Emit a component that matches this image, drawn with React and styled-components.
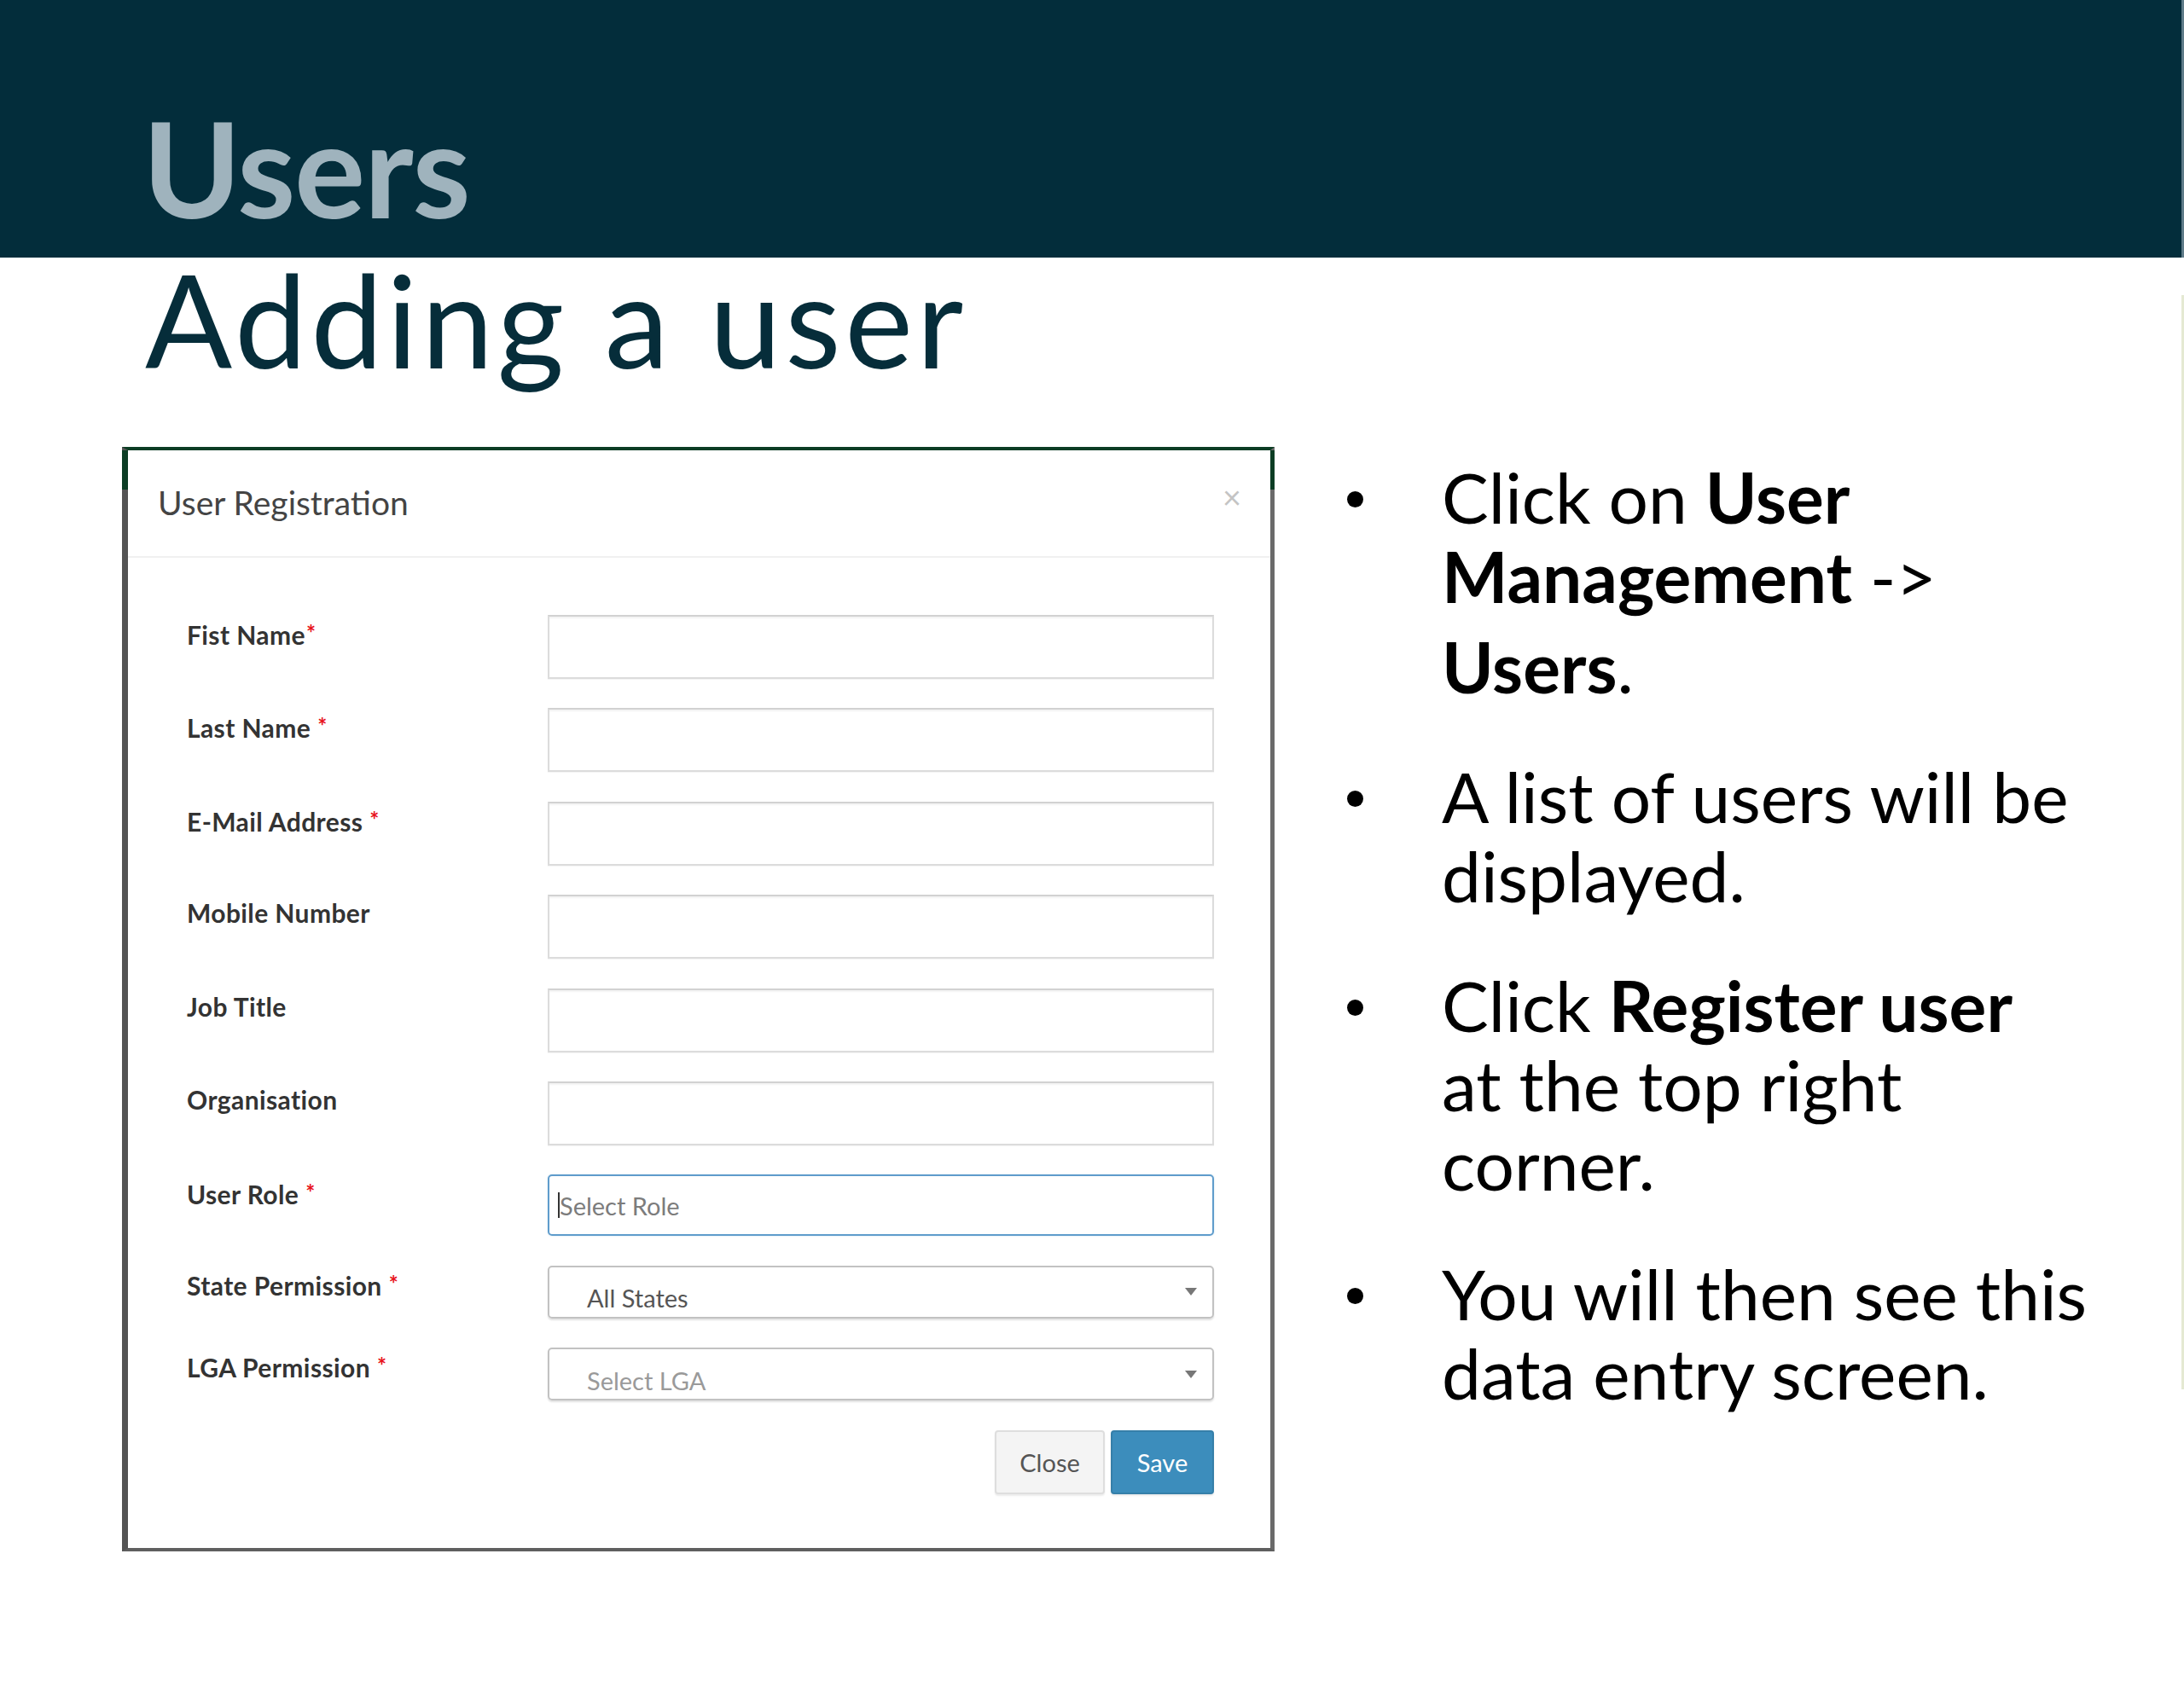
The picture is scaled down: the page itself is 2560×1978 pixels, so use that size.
import React from "react";
import styled, { createGlobalStyle } from "styled-components";

const GlobalStyle = createGlobalStyle`
  html, body { margin: 0; padding: 0; background: #ffffff; }
  body { width: 2560px; height: 1978px; overflow: hidden; }
  * { box-sizing: border-box; }
`;

const Page = styled.div`
  display: flex;
  width: 2560px;
  height: 1978px;
  background: #ffffff;
  font-family: Lato, "Noto Sans", sans-serif;
`;

const Slide = styled.div`
  flex: 1;
  display: flex;
  flex-direction: column;
`;

const Edge = styled.div`
  width: 3px;
  display: flex;
  flex-direction: column;
`;

const EdgeTop = styled.div`
  height: 302px;
  background: #5e7b88;
`;

const EdgeLine = styled.div`
  margin-top: 44px;
  height: 1283px;
  background: #e4e9d2;
`;

const Banner = styled.header`
  height: 302px;
  background: #032d3b;
  padding: 118px 0 0 167px;
`;

const BannerTitle = styled.h1`
  margin: 0;
  font-family: Lato, sans-serif;
  font-weight: 700;
  font-size: 156px;
  line-height: 156px;
  color: #9fb3bd;
  letter-spacing: -1.5px;
`;

const Subtitle = styled.h2`
  margin: 2px 0 0 170px;
  font-family: Lato, sans-serif;
  font-weight: 400;
  font-size: 151px;
  line-height: 140px;
  color: #062d3a;
  letter-spacing: 4.5px;
`;

const Content = styled.div`
  display: flex;
  align-items: flex-start;
  margin-top: 80px;
  padding-left: 143px;
`;

/* ---------- Modal ---------- */

const Modal = styled.section`
  position: relative;
  width: 1351px;
  height: 1295px;
  border-top: 4px solid #0c3d24;
  border-left: 7px solid #545454;
  border-right: 5px solid #6a6a6a;
  border-bottom: 4px solid #5f5f5f;
  background: #ffffff;
  display: flex;
  flex-direction: column;
  font-family: Lato, "Noto Sans", sans-serif;

  &::before,
  &::after {
    content: "";
    position: absolute;
    top: 0;
    height: 46px;
    background: #0c3d24;
  }
  &::before { left: -7px; width: 7px; }
  &::after { right: -5px; width: 5px; }
`;

const ModalHeader = styled.div`
  height: 126px;
  border-bottom: 2px solid #f0f0f0;
  display: flex;
  justify-content: space-between;
  align-items: flex-start;
  padding: 38px 34px 0 35px;
`;

const ModalTitle = styled.div`
  font-size: 39px;
  line-height: 47px;
  font-weight: 400;
  color: #444;
`;

const CloseX = styled.span`
  margin-top: -3px;
  font-size: 38px;
  line-height: 38px;
  color: #c4c4c4;
  font-weight: 400;
`;

const ModalBody = styled.div`
  display: grid;
  grid-template-columns: 423px 781px;
  row-gap: 34.4px;
  padding: 67px 65px 0 69px;
  align-items: start;
`;

const Label = styled.div`
  font-size: 30px;
  line-height: 34px;
  font-weight: 700;
  letter-spacing: 0.4px;
  color: #333;
  padding-top: 4px;
  white-space: nowrap;
`;

const Req = styled.span`
  color: #e8141c;
  font-size: 26px;
  font-weight: 700;
  vertical-align: 4px;
  margin-left: ${(p) => (p.$tight ? "1px" : "8px")};
`;

const TextInput = styled.div`
  height: 75px;
  border: 2px solid #dcdcdc;
  border-top-color: #d2d2d2;
  box-shadow: inset 0 2px 2px rgba(0, 0, 0, 0.05), 0 1px 1px rgba(0, 0, 0, 0.04);
  background: #fff;
`;

const FocusInput = styled.div`
  height: 72px;
  border: 2px solid #5f9ccc;
  border-radius: 5px;
  display: flex;
  align-items: center;
  padding-left: 10px;
  font-size: 29px;
  color: #7c7c7c;
  box-shadow: 0 0 2px rgba(60, 141, 188, 0.3);
`;

const Caret = styled.span`
  width: 2px;
  height: 30px;
  background: #333;
`;

const SelectBox = styled.div`
  height: 62px;
  border: 2px solid #c2c2c2;
  border-radius: 5px;
  box-shadow: 0 2px 2px rgba(0, 0, 0, 0.12);
  display: flex;
  align-items: center;
  justify-content: space-between;
  padding: 14px 18px 0 44px;
  font-size: 29px;
  color: ${(p) => (p.$placeholder ? "#9a9a9a" : "#555")};
`;

const Arrow = styled.span`
  width: 0;
  height: 0;
  border-left: 7px solid transparent;
  border-right: 7px solid transparent;
  border-top: 9px solid #777;
  margin-top: -14px;
`;

const Actions = styled.div`
  grid-column: 2;
  display: flex;
  justify-content: flex-end;
  gap: 7px;
`;

const Button = styled.div`
  height: 75px;
  width: ${(p) => p.$w}px;
  border-radius: 4px;
  display: flex;
  align-items: center;
  justify-content: center;
  font-size: 29px;
  background: ${(p) => (p.$primary ? "#3c8dbc" : "#f4f4f4")};
  border: 2px solid ${(p) => (p.$primary ? "#367fa9" : "#dedede")};
  color: ${(p) => (p.$primary ? "#ffffff" : "#555")};
  box-shadow: 0 2px 2px rgba(0, 0, 0, 0.08);
`;

/* ---------- Bullets ---------- */

const Notes = styled.ul`
  list-style: none;
  margin: 12px 0 0 85px;
  padding: 0;
  display: flex;
  flex-direction: column;
  gap: 59px;
`;

const Note = styled.li`
  display: flex;
  align-items: flex-start;
`;

const Dot = styled.span`
  flex: none;
  width: 19px;
  height: 19px;
  border-radius: 50%;
  background: #000;
  margin-top: 40px;
  margin-right: 92px;
`;

const NoteText = styled.p`
  margin: 0;
  font-family: Lato, sans-serif;
  font-size: 82px;
  color: #000;
  white-space: nowrap;
  b { font-weight: 700; }
`;

const NoteLine = styled.span`
  display: block;
  line-height: 93px;
  margin-top: ${(p) => p.$shift || 0}px;
`;

const fields = [
  { label: "Fist Name", req: "tight" },
  { label: "Last Name", req: "yes" },
  { label: "E-Mail Address", req: "yes" },
  { label: "Mobile Number" },
  { label: "Job Title" },
  { label: "Organisation" },
];

function FieldLabel({ text, req }) {
  return (
    <Label>
      {text}
      {req && <Req $tight={req === "tight"}>*</Req>}
    </Label>
  );
}

export default function App() {
  return (
    <>
      <GlobalStyle />
      <Page>
        <Slide>
          <Banner>
            <BannerTitle>Users</BannerTitle>
          </Banner>
          <Subtitle>Adding a user</Subtitle>
          <Content>
            <Modal>
              <ModalHeader>
                <ModalTitle>User Registration</ModalTitle>
                <CloseX>×</CloseX>
              </ModalHeader>
              <ModalBody>
                {fields.map((f) => (
                  <React.Fragment key={f.label}>
                    <FieldLabel text={f.label} req={f.req} />
                    <TextInput />
                  </React.Fragment>
                ))}
                <FieldLabel text="User Role" req="yes" />
                <FocusInput>
                  <Caret />
                  Select Role
                </FocusInput>
                <FieldLabel text="State Permission" req="yes" />
                <SelectBox>
                  All States
                  <Arrow />
                </SelectBox>
                <FieldLabel text="LGA Permission" req="yes" />
                <SelectBox $placeholder>
                  Select LGA
                  <Arrow />
                </SelectBox>
                <Actions>
                  <Button $w={129}>Close</Button>
                  <Button $w={121} $primary>Save</Button>
                </Actions>
              </ModalBody>
            </Modal>
            <Notes>
              <Note>
                <Dot />
                <NoteText>
                  <NoteLine>Click on <b>User</b></NoteLine>
                  <NoteLine><b>Management</b> -&gt;</NoteLine>
                  <NoteLine $shift={13}><b>Users</b>.</NoteLine>
                </NoteText>
              </Note>
              <Note>
                <Dot />
                <NoteText>
                  <NoteLine>A list of users will be</NoteLine>
                  <NoteLine>displayed.</NoteLine>
                </NoteText>
              </Note>
              <Note>
                <Dot />
                <NoteText>
                  <NoteLine>Click <b>Register user</b></NoteLine>
                  <NoteLine>at the top right</NoteLine>
                  <NoteLine>corner.</NoteLine>
                </NoteText>
              </Note>
              <Note>
                <Dot />
                <NoteText>
                  <NoteLine>You will then see this</NoteLine>
                  <NoteLine>data entry screen.</NoteLine>
                </NoteText>
              </Note>
            </Notes>
          </Content>
        </Slide>
        <Edge>
          <EdgeTop />
          <EdgeLine />
        </Edge>
      </Page>
    </>
  );
}
